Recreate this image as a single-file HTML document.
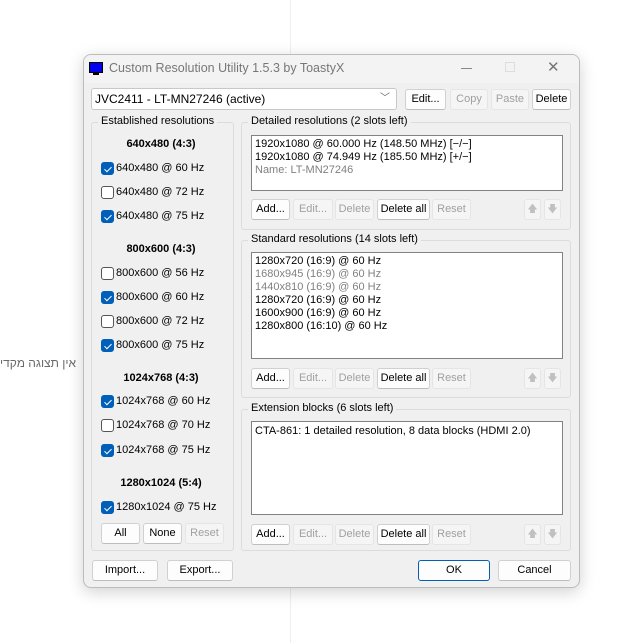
<!DOCTYPE html>
<html><head><meta charset="utf-8"><style>
*{box-sizing:border-box;margin:0;padding:0}
body{width:643px;height:643px;background:#fff;position:relative;overflow:hidden;font-family:"Liberation Sans",sans-serif;font-size:11px;color:#000}
.a{position:absolute;white-space:nowrap}
.win{position:absolute;left:83px;top:54px;width:497px;height:534px;background:#f0f0f0;border:1px solid #bcbcbc;border-radius:8px;box-shadow:0 4px 16px rgba(0,0,0,.18);overflow:hidden}
.tb{position:absolute;left:0;top:0;width:100%;height:28px;background:#f3f3f3}
.btn{position:absolute;height:21px;background:#fdfdfd;border:1px solid #d0d0d0;border-bottom-color:#bdbdbd;border-radius:3px;text-align:center;line-height:19px;font-size:11px}
.dis{background:#f5f5f5;border-color:#e5e5e5;color:#a0a0a0}
.grp{position:absolute;border:1px solid #dcdcdc;border-radius:3px}
.gl{position:absolute;background:#f0f0f0;padding:0 3px;top:-8px;left:6px;font-size:11px}
.box{position:absolute;background:#fff;border:1px solid #828282;padding:2px 3px;line-height:13px;font-size:11px}
.cb{position:absolute;width:13px;height:13px;border:1px solid #555;border-radius:3px;background:#fff}
.cb.on{background:#005fb8;border-color:#005fb8}
.cb.on:after{content:"";position:absolute;left:4px;top:2px;width:3px;height:6px;border:solid #fff;border-width:0 1px 1px 0;transform:rotate(45deg)}
.h{position:absolute;font-weight:bold;width:140px;text-align:center;font-size:11px}
.g{color:#808080}
.ar{color:#c0c0c0}
</style></head><body>
<div class="a" style="left:290px;top:0;width:1px;height:643px;background:#eeeeee"></div>
<div class="a" style="left:0;top:356px;color:#6a6a6a;font-size:12px;font-family:'Liberation Sans','DejaVu Sans',sans-serif">אין תצוגה מקדי</div>
<div class="win">
<div class="tb"></div>
<div class="a" style="left:5px;top:7px;width:14px;height:11px;background:#0000ee;border:1px solid #000"></div>
<div class="a" style="left:9px;top:18px;width:6px;height:2px;background:#000"></div>
<div class="a" style="left:25px;top:6px;color:#777;font-size:12.5px">Custom Resolution Utility 1.5.3 by ToastyX</div>
<div class="a" style="left:377px;top:13px;width:11px;height:1px;background:#888"></div>
<div class="a" style="left:421px;top:7px;width:10px;height:10px;border:1px solid #ddd"></div>
<div class="a" style="left:463px;top:3px;color:#777;font-size:15px">✕</div>

<div class="a" style="left:7px;top:33px;width:306px;height:22px;background:#fff;border:1px solid #c8c8c8;border-radius:3px;line-height:20px;padding-left:3px;font-size:12px">JVC2411 - LT-MN27246 (active)<span style="position:absolute;right:6px;top:0;color:#666;font-size:10px">﹀</span></div>
<div class="btn" style="left:321px;top:34px;width:41px">Edit...</div>
<div class="btn dis" style="left:366px;top:34px;width:38px">Copy</div>
<div class="btn dis" style="left:407px;top:34px;width:38px">Paste</div>
<div class="btn" style="left:448px;top:34px;width:39px">Delete</div>

<div class="grp" style="left:7px;top:67px;width:143px;height:429px"><div class="gl">Established resolutions</div></div>
<div class="h" style="left:7px;top:83px">640x480 (4:3)</div>
<div class="cb on" style="left:17px;top:107px"></div><div class="a" style="left:32px;top:107px">640x480 @ 60 Hz</div>
<div class="cb" style="left:17px;top:131px"></div><div class="a" style="left:32px;top:131px">640x480 @ 72 Hz</div>
<div class="cb on" style="left:17px;top:155px"></div><div class="a" style="left:32px;top:155px">640x480 @ 75 Hz</div>
<div class="h" style="left:7px;top:188px">800x600 (4:3)</div>
<div class="cb" style="left:17px;top:212px"></div><div class="a" style="left:32px;top:212px">800x600 @ 56 Hz</div>
<div class="cb on" style="left:17px;top:236px"></div><div class="a" style="left:32px;top:236px">800x600 @ 60 Hz</div>
<div class="cb" style="left:17px;top:260px"></div><div class="a" style="left:32px;top:260px">800x600 @ 72 Hz</div>
<div class="cb on" style="left:17px;top:284px"></div><div class="a" style="left:32px;top:284px">800x600 @ 75 Hz</div>
<div class="h" style="left:7px;top:317px">1024x768 (4:3)</div>
<div class="cb on" style="left:17px;top:340px"></div><div class="a" style="left:32px;top:340px">1024x768 @ 60 Hz</div>
<div class="cb" style="left:17px;top:364px"></div><div class="a" style="left:32px;top:364px">1024x768 @ 70 Hz</div>
<div class="cb on" style="left:17px;top:389px"></div><div class="a" style="left:32px;top:389px">1024x768 @ 75 Hz</div>
<div class="h" style="left:7px;top:422px">1280x1024 (5:4)</div>
<div class="cb on" style="left:17px;top:446px"></div><div class="a" style="left:32px;top:446px">1280x1024 @ 75 Hz</div>
<div class="btn" style="left:17px;top:468px;width:39px">All</div>
<div class="btn" style="left:59px;top:468px;width:39px">None</div>
<div class="btn dis" style="left:101px;top:468px;width:39px">Reset</div>

<div class="grp" style="left:157px;top:67px;width:330px;height:108px"><div class="gl">Detailed resolutions (2 slots left)</div></div>
<div class="box" style="left:167px;top:80px;width:312px;height:56px">1920x1080 @ 60.000 Hz (148.50 MHz) [−/−]<br>1920x1080 @ 74.949 Hz (185.50 MHz) [+/−]<br><span class="g">Name: LT-MN27246</span></div>
<div class="btn" style="left:167px;top:144px;width:39px">Add...</div>
<div class="btn dis" style="left:209px;top:144px;width:40px">Edit...</div>
<div class="btn dis" style="left:251px;top:144px;width:39px">Delete</div>
<div class="btn" style="left:293px;top:144px;width:53px">Delete all</div>
<div class="btn dis" style="left:348px;top:144px;width:39px">Reset</div>
<div class="btn dis ar" style="left:440px;top:144px;width:17px;font-size:10px">🡅</div>
<div class="btn dis ar" style="left:460px;top:144px;width:17px;font-size:10px">🡇</div>

<div class="grp" style="left:157px;top:185px;width:330px;height:158px"><div class="gl">Standard resolutions (14 slots left)</div></div>
<div class="box" style="left:167px;top:197px;width:312px;height:107px">1280x720 (16:9) @ 60 Hz<br><span class="g">1680x945 (16:9) @ 60 Hz<br>1440x810 (16:9) @ 60 Hz</span><br>1280x720 (16:9) @ 60 Hz<br>1600x900 (16:9) @ 60 Hz<br>1280x800 (16:10) @ 60 Hz</div>
<div class="btn" style="left:167px;top:313px;width:39px">Add...</div>
<div class="btn dis" style="left:209px;top:313px;width:40px">Edit...</div>
<div class="btn dis" style="left:251px;top:313px;width:39px">Delete</div>
<div class="btn" style="left:293px;top:313px;width:53px">Delete all</div>
<div class="btn dis" style="left:348px;top:313px;width:39px">Reset</div>
<div class="btn dis ar" style="left:440px;top:313px;width:17px;font-size:10px">🡅</div>
<div class="btn dis ar" style="left:460px;top:313px;width:17px;font-size:10px">🡇</div>

<div class="grp" style="left:157px;top:354px;width:330px;height:142px"><div class="gl">Extension blocks (6 slots left)</div></div>
<div class="box" style="left:167px;top:366px;width:312px;height:94px;padding-top:3px">CTA-861: 1 detailed resolution, 8 data blocks (HDMI 2.0)</div>
<div class="btn" style="left:167px;top:469px;width:39px">Add...</div>
<div class="btn dis" style="left:209px;top:469px;width:40px">Edit...</div>
<div class="btn dis" style="left:251px;top:469px;width:39px">Delete</div>
<div class="btn" style="left:293px;top:469px;width:53px">Delete all</div>
<div class="btn dis" style="left:348px;top:469px;width:39px">Reset</div>
<div class="btn dis ar" style="left:440px;top:469px;width:17px;font-size:10px">🡅</div>
<div class="btn dis ar" style="left:460px;top:469px;width:17px;font-size:10px">🡇</div>

<div class="btn" style="left:8px;top:505px;width:66px;height:21px">Import...</div>
<div class="btn" style="left:83px;top:505px;width:66px;height:21px">Export...</div>
<div class="btn" style="left:334px;top:505px;width:72px;height:21px;border-color:#005fb8">OK</div>
<div class="btn" style="left:414px;top:505px;width:73px;height:21px">Cancel</div>
</div>
</body></html>
